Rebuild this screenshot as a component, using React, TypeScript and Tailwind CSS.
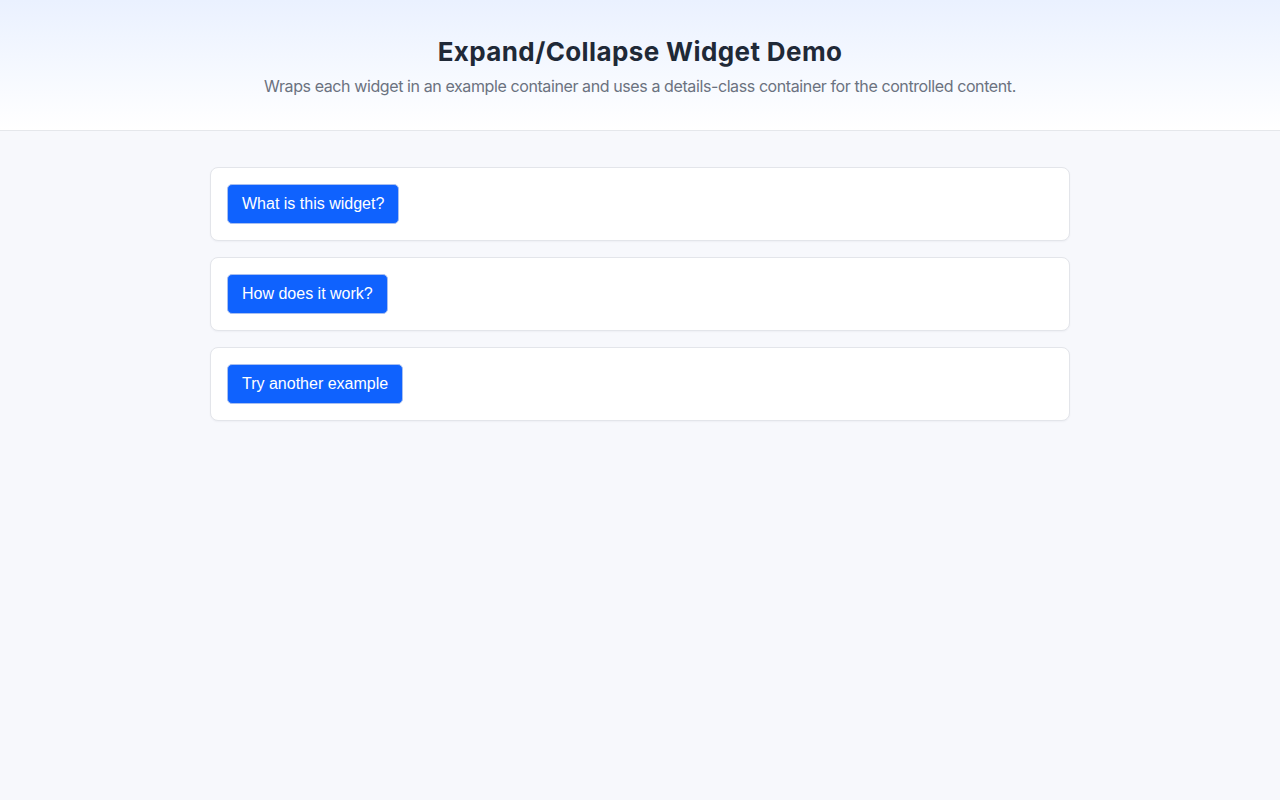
import React, { useState } from "react";

const ITEMS = [
  {
    title: "What is this widget?",
    body: "An expand/collapse widget toggles the visibility of a details container.",
  },
  {
    title: "How does it work?",
    body: "Clicking the button flips aria-expanded and shows or hides the controlled content.",
  },
  {
    title: "Try another example",
    body: "Each widget keeps its own open state, independent of the others.",
  },
];

const Widget: React.FC<{ title: string; body: string; id: string }> = ({
  title,
  body,
  id,
}) => {
  const [open, setOpen] = useState(false);
  return (
    <div className="rounded-lg border border-[#e3e5ea] bg-white p-4 shadow-[0_1px_2px_rgba(16,24,40,0.04)]">
      <button
        type="button"
        aria-expanded={open}
        aria-controls={id}
        onClick={() => setOpen((v) => !v)}
        className="rounded-[5px] border border-[#a8bff0] bg-[#0f62fe] px-[14px] py-[7px] text-[16px] leading-6 text-white font-['Liberation_Sans',Arial,sans-serif]"
      >
        {title}
      </button>
      {open && (
        <div id={id} className="details mt-3 text-sm text-[#4b5563]">
          {body}
        </div>
      )}
    </div>
  );
};

export default function App() {
  return (
    <div className="min-h-screen bg-[#f7f8fc] font-['Inter',sans-serif]">
      <header className="border-b border-[#e5e7eb] bg-gradient-to-b from-[#eaf1ff] to-white pt-9 pb-8 text-center">
        <h1 className="text-[26px] font-bold leading-8 tracking-[0.015em] text-[#1f2937]">
          Expand/Collapse Widget Demo
        </h1>
        <p className="mt-[6px] text-[16px] leading-6 tracking-[-0.025em] text-[#6b7280]">
          Wraps each widget in an example container and uses a details-class
          container for the controlled content.
        </p>
      </header>
      <main className="mx-auto flex w-[860px] flex-col gap-4 pt-9">
        {ITEMS.map((item, i) => (
          <Widget key={item.title} id={`details-${i}`} {...item} />
        ))}
      </main>
    </div>
  );
}
